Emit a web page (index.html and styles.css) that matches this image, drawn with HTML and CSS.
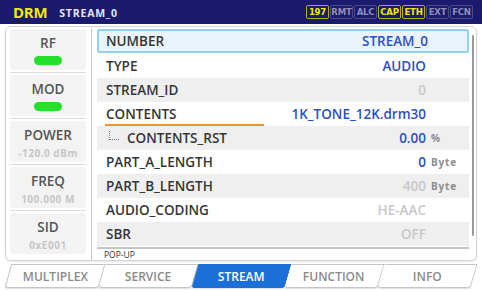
FILE: index.html
```html
<!DOCTYPE html>
<html lang="en">
<head>
    <meta charset="UTF-8">
    <title>DRM Stream</title>
    <link rel="stylesheet" href="styles.css">
</head>
<body>
<div class="header">
    <span class="brand">DRM</span>
    <span class="title">STREAM_0</span>
    <div class="badges">
        <span class="badge on">197</span>
        <span class="badge">RMT</span>
        <span class="badge">ALC</span>
        <span class="badge on">CAP</span>
        <span class="badge on">ETH</span>
        <span class="badge">EXT</span>
        <span class="badge">FCN</span>
    </div>
</div>

<div class="panel">
    <div class="side">
        <div class="cell"><div class="cell-label">RF</div><div class="pill"></div></div>
        <div class="sep"></div>
        <div class="cell"><div class="cell-label">MOD</div><div class="pill"></div></div>
        <div class="sep"></div>
        <div class="cell"><div class="cell-label">POWER</div><div class="cell-value">-120.0 dBm</div></div>
        <div class="sep"></div>
        <div class="cell"><div class="cell-label">FREQ</div><div class="cell-value">100.000 M</div></div>
        <div class="sep"></div>
        <div class="cell"><div class="cell-label">SID</div><div class="cell-value">0xE001</div></div>
    </div>
    <div class="main">
        <div class="list">
            <div class="row selected"><span class="label">NUMBER</span><span class="value">STREAM_0</span><span class="unit"></span></div>
            <div class="row"><span class="label">TYPE</span><span class="value">AUDIO</span><span class="unit"></span></div>
            <div class="row shade"><span class="label">STREAM_ID</span><span class="value off">0</span><span class="unit"></span></div>
            <div class="row"><span class="label edit">CONTENTS</span><span class="value wide">1K_TONE_12K.drm30</span><span class="unit"></span></div>
            <div class="row shade"><span class="label sub"><span class="tree"></span>CONTENTS_RST</span><span class="value">0.00</span><span class="unit">%</span></div>
            <div class="row"><span class="label">PART_A_LENGTH</span><span class="value">0</span><span class="unit">Byte</span></div>
            <div class="row shade"><span class="label">PART_B_LENGTH</span><span class="value off">400</span><span class="unit">Byte</span></div>
            <div class="row"><span class="label">AUDIO_CODING</span><span class="value off">HE-AAC</span><span class="unit"></span></div>
            <div class="row shade"><span class="label">SBR</span><span class="value off">OFF</span><span class="unit"></span></div>
        </div>
        <div class="popup">POP-UP</div>
    </div>
    <div class="scroll"></div>
</div>

<div class="tabs">
    <div class="tab first"><span>MULTIPLEX</span></div>
    <div class="tab"><span>SERVICE</span></div>
    <div class="tab active"><span>STREAM</span></div>
    <div class="tab"><span>FUNCTION</span></div>
    <div class="tab"><span>INFO</span></div>
</div>
</body>
</html>
```

FILE: styles.css
```css
body {
    margin: 0;
    width: 482px;
    height: 290px;
    background: #fff;
    font-family: "Open Sans", "Noto Sans", sans-serif;
    overflow: hidden;
}
.header {
    height: 24px;
    background: #1b1a6c;
    display: flex;
    align-items: center;
    padding-left: 13px;
}
.brand {
    color: #f2ea00;
    font-size: 15px;
    font-weight: 700;
    letter-spacing: -0.3px;
}
.title {
    color: #e4e4f2;
    font-size: 10.5px;
    font-weight: 700;
    margin-left: 12px;
    margin-top: 2px;
    letter-spacing: 0.8px;
}
.badges {
    margin-left: auto;
    margin-right: 9px;
    display: flex;
    gap: 1px;
}
.badge {
    width: 21px;
    height: 12px;
    border: 1px solid #4c4c86;
    border-radius: 2px;
    color: #8e8eb8;
    font-size: 9.5px;
    font-weight: 700;
    line-height: 12px;
    text-align: center;
    letter-spacing: -0.2px;
    font-family: "DejaVu Sans Condensed", "Open Sans", sans-serif;
}
.badge.on {
    border-color: #b8b000;
    color: #f2ea00;
}
.panel {
    margin: 2px 5px 0;
    height: 231px;
    border: 1px solid #d4d4d4;
    border-radius: 6px;
    display: flex;
    padding: 2px 0 0 4px;
    box-shadow: 0 1px 2px rgba(0, 0, 0, 0.1);
}
.side {
    width: 76px;
    padding-right: 5px;
    border-right: 1px solid #c8c8c8;
    margin-bottom: -1px;
}
.cell {
    height: 41px;
    background: #f3f3f3;
    border-radius: 3px;
    display: flex;
    flex-direction: column;
    align-items: center;
}
.cell-label {
    font-size: 13.5px;
    font-weight: 600;
    color: #555;
    margin-top: 6px;
    line-height: 17px;
}
.cell-value {
    font-size: 10px;
    font-weight: 700;
    color: #c6c6c6;
    margin-top: 2px;
    letter-spacing: 0.5px;
}
.pill {
    width: 28px;
    height: 9px;
    border-radius: 5px;
    background: #25e02a;
    margin-top: 4px;
}
.sep {
    height: 1px;
    margin: 2px 0;
    background: #dcdcdc;
}
.main {
    flex: 1;
    padding-left: 5px;
    display: flex;
    flex-direction: column;
}
.list {
    border-bottom: 2px solid #c4c4c4;
    padding-bottom: 1px;
}
.row {
    height: 24px;
    display: flex;
    align-items: center;
    font-size: 13.5px;
}
.row.shade {
    background: #efefef;
}
.row.selected {
    background: #eaf4fc;
    border: 2px solid #8ed0f4;
    border-radius: 3px;
    height: 20px;
    margin-bottom: 1px;
}
.label {
    padding-left: 9px;
    width: 170px;
    font-weight: 600;
    color: #363636;
}
.row.selected .label {
    padding-left: 7px;
}
.label.edit {
    border-bottom: 2px solid #f29620;
    width: 158px;
    padding-bottom: 1px;
    margin-top: 3px;
    margin-left: 8px;
    padding-left: 1px;
    margin-right: 12px;
}
.label.sub {
    display: flex;
    align-items: center;
    padding-left: 12px;
}
.tree {
    width: 9px;
    height: 8px;
    border-left: 1px dotted #777;
    border-bottom: 1px dotted #777;
    margin: -6px 8px 0 0;
}
.value {
    flex: 1;
    text-align: right;
    font-weight: 600;
    color: #2c50c4;
    white-space: nowrap;
}
.row.selected .value {
    margin-right: -2px;
}
.value.off {
    color: #c8c8c8;
    font-weight: 600;
}
.unit {
    width: 38px;
    padding-left: 5px;
    font-size: 10px;
    font-weight: 700;
    color: #8c8c8c;
    letter-spacing: 0.8px;
}
.row.selected .unit {
    width: 36px;
}
.popup {
    font-size: 8.5px;
    color: #333;
    padding: 0 0 0 7px;
}
.scroll {
    width: 2px;
    background: #9a9a9a;
    margin: 6px 2px 24px 3px;
    border-radius: 1px;
}
.tabs {
    display: flex;
    margin: 3px 0 0 8px;
    width: 466px;
}
.tab {
    flex: 1;
    height: 22px;
    border: 1px solid #c6c6c6;
    border-left: none;
    transform: skewX(-16deg);
    display: flex;
    align-items: center;
    justify-content: center;
    background: #fff;
    border-radius: 0 0 3px 3px;
    box-shadow: 0 1px 1px rgba(0, 0, 0, 0.12);
}
.tab.first {
    border-left: 1px solid #c6c6c6;
}
.tab span {
    transform: skewX(16deg);
    font-size: 12px;
    font-weight: 600;
    color: #8a8a8a;
}
.tab.active {
    background: #1d6fd8;
    border-color: #1d6fd8;
}
.tab.active span {
    color: #fff;
}
```
